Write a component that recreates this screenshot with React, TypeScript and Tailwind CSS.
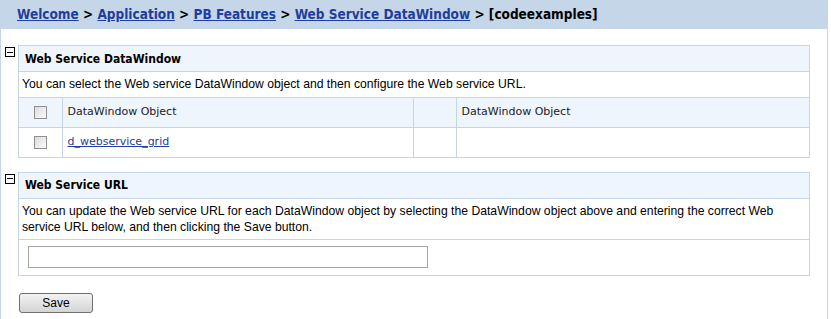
import React from "react";

function Minus() {
  return (
    <div className="ml-[4px] mt-[2px] flex h-[10px] w-[10px] items-center justify-center border border-black bg-white">
      <div className="h-px w-[6px] bg-black" />
    </div>
  );
}

function Check() {
  return (
    <div className="mx-auto h-[13px] w-[13px] border border-[#8f8f8f] bg-gradient-to-br from-[#dcdcdc] to-[#fbfbfb]" />
  );
}

function Section({ title, children }: { title: string; children: React.ReactNode }) {
  return (
    <div className="flex">
      <div className="w-[17px] shrink-0">
        <Minus />
      </div>
      <div className="flex-1 border border-[#c5d5e6]">
        <div className="flex h-[25px] items-center bg-[#eff5fd] px-[6px] font-['DejaVu_Sans_Condensed','DejaVu_Sans',sans-serif] text-[12px] font-bold text-black">
          {title}
        </div>
        {children}
      </div>
    </div>
  );
}

export default function App() {
  const crumbs = ["Welcome", "Application", "PB Features", "Web Service DataWindow"];
  return (
    <div className="h-[319px] w-[828px] bg-white font-['Liberation_Sans',Arial,sans-serif]">
      <div className="h-[29px] bg-[#c5d6e8] pl-[17px] pt-[6px] font-['DejaVu_Sans_Condensed','DejaVu_Sans',sans-serif] text-[13.5px] font-bold leading-[17px] whitespace-pre text-black">
        {crumbs.map((c) => (
          <React.Fragment key={c}>
            <a href="#" className="text-[#1f3d9e] underline">
              {c}
            </a>
            {" > "}
          </React.Fragment>
        ))}
        [codeexamples]
      </div>
      <div className="flex h-[290px] flex-col border-x border-[#c5d5e6] pr-[17px] pt-[16px]">
        <Section title="Web Service DataWindow">
          <div className="border-t border-[#c5d5e6] px-[3px] py-[5px] text-[12.2px] leading-[15px] text-black">
            You can select the Web service DataWindow object and then configure the Web service URL.
          </div>
          <table className="w-full border-collapse font-['DejaVu_Sans',sans-serif] text-[11px] text-[#222]">
            <tbody>
              <tr className="h-[30px] bg-[#eff5fd]">
                <td className="w-[43px] border-t border-r border-[#c5d5e6]">
                  <Check />
                </td>
                <td className="w-[351px] border-t border-r border-[#c5d5e6] px-[5px]">DataWindow Object</td>
                <td className="w-[43px] border-t border-r border-[#c5d5e6]" />
                <td className="border-t border-[#c5d5e6] px-[5px]">DataWindow Object</td>
              </tr>
              <tr className="h-[29px] bg-white">
                <td className="border-t border-r border-[#c5d5e6]">
                  <Check />
                </td>
                <td className="border-t border-r border-[#c5d5e6] px-[5px]">
                  <a href="#" className="text-[#1f3d9e] underline">
                    d_webservice_grid
                  </a>
                </td>
                <td className="border-t border-r border-[#c5d5e6]" />
                <td className="border-t border-[#c5d5e6]" />
              </tr>
            </tbody>
          </table>
        </Section>
        <div className="h-[14px] shrink-0" />
        <Section title="Web Service URL">
          <div className="border-t border-[#c5d5e6] px-[3px] pb-[4px] pt-[4px] text-[12.2px] leading-[16px] text-black">
            You can update the Web service URL for each DataWindow object by selecting the DataWindow object above and
            entering the correct Web service URL below, and then clicking the Save button.
          </div>
          <div className="flex h-[36px] items-center border-t border-[#c5d5e6] px-[9px]">
            <input className="h-[22px] w-[400px] border border-[#a5a5a5] bg-white outline-none" />
          </div>
        </Section>
        <div className="flex pl-[18px] pt-[17px]">
          <button className="h-[20px] w-[74px] rounded-[3px] border border-[#707070] bg-gradient-to-b from-[#f3f3f3] to-[#d4d4d4] text-[12px] leading-[18px] text-black">
            Save
          </button>
        </div>
      </div>
    </div>
  );
}
